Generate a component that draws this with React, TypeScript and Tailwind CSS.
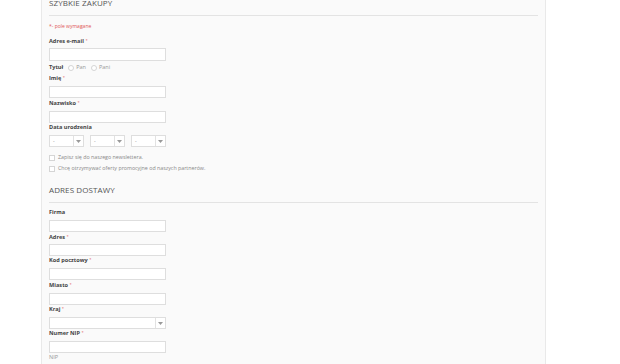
import React from "react";

const font = { fontFamily: '"Open Sans", "Liberation Sans", sans-serif' };

function Label({ text, req = true, className = "" }: { text: string; req?: boolean; className?: string }) {
  return (
    <div className={`h-[8px] flex items-center text-[5.6px] font-bold text-[#444] whitespace-nowrap overflow-visible ${className}`}>
      <span className="leading-none">{text}</span>
      {req && <span className="font-normal text-[#e05555] text-[4px] leading-none ml-[1.5px] self-start mt-[0.5px]">*</span>}
    </div>
  );
}

function Input({ className = "" }: { className?: string }) {
  return <div className={`w-[117px] h-[12px] bg-white border border-[#dedede] ${className}`} />;
}

function Arrow() {
  return (
    <div className="w-[10px] h-full border-l border-[#e2e2e2] flex items-center justify-center">
      <svg width="5" height="3" viewBox="0 0 5 3">
        <path d="M0 0 L5 0 L2.5 3 Z" fill="#999" />
      </svg>
    </div>
  );
}

function Select({ w, dash = true }: { w: string; dash?: boolean }) {
  return (
    <div className={`${w} h-[12px] bg-white border border-[#dedede] flex items-center justify-between`}>
      <span className="pl-[3px] text-[5px] text-[#888] leading-none">{dash ? "-" : ""}</span>
      <Arrow />
    </div>
  );
}

function Check({ text }: { text: string }) {
  return (
    <div className="flex items-center h-[8px] gap-[3px]">
      <div className="w-[6px] h-[6px] border border-[#d5d5d5] bg-white" />
      <span className="text-[5.3px] text-[#888] leading-none whitespace-nowrap">{text}</span>
    </div>
  );
}

function Radio({ text }: { text: string }) {
  return (
    <div className="flex items-center gap-[2px]">
      <div className="w-[6px] h-[6px] rounded-full border border-[#d5d5d5] bg-white" />
      <span className="text-[5.5px] text-[#999] leading-none">{text}</span>
    </div>
  );
}

function Heading({ text }: { text: string }) {
  return (
    <div className="border-b border-[#e3e3e3] text-[8px] leading-[12px] text-[#555] tracking-[0.1px] whitespace-nowrap pb-[6px] mr-[7px]">
      {text}
    </div>
  );
}

export default function App() {
  return (
    <div className="w-[620px] h-[364px] overflow-hidden bg-white" style={font}>
      <div className="ml-[41px] w-[505px] h-[364px] bg-[#fafafa] border-l border-r border-[#e9e9e9] pl-[7px] overflow-hidden">
        <div className="mt-[-6px] h-[22px] flex flex-col justify-end">
          <Heading text="SZYBKIE ZAKUPY" />
        </div>
        <div className="mt-[6px] h-[8px] leading-[8px] text-[5px] text-[#e05555]">*- pole wymagane</div>
        <Label text="Adres e-mail" className="mt-[8px]" />
        <Input className="mt-[2px] h-[13px]" />
        <div className="mt-[3px] h-[8px] flex items-center gap-[5px]">
          <span className="text-[5.6px] font-bold text-[#444] leading-none">Tytuł</span>
          <Radio text="Pan" />
          <Radio text="Pani" />
        </div>
        <Label text="Imię" className="mt-[3px]" />
        <Input className="mt-[3px]" />
        <Label text="Nazwisko" className="mt-[2px]" />
        <Input className="mt-[3px]" />
        <Label text="Data urodzenia" req={false} className="mt-[1px]" />
        <div className="mt-[3px] flex gap-[6px]">
          <Select w="w-[35px]" />
          <Select w="w-[35px]" />
          <Select w="w-[35px]" />
        </div>
        <div className="mt-[7px] flex flex-col gap-[3px]">
          <Check text="Zapisz się do naszego newslettera." />
          <Check text="Chcę otrzymywać oferty promocyjne od naszych partnerów." />
        </div>
        <div className="h-[30px] flex flex-col justify-end">
          <Heading text="ADRES DOSTAWY" />
        </div>
        <Label text="Firma" req={false} className="mt-[6px]" />
        <Input className="mt-[3px]" />
        <Label text="Adres" className="mt-[2px]" />
        <Input className="mt-[2px]" />
        <Label text="Kod pocztowy" className="mt-[1px]" />
        <Input className="mt-[3px]" />
        <Label text="Miasto" className="mt-[2px]" />
        <Input className="mt-[3px]" />
        <Label text="Kraj" className="mt-[1px]" />
        <div className="mt-[3px]">
          <Select w="w-[117px]" dash={false} />
        </div>
        <Label text="Numer NIP" className="mt-[1px]" />
        <Input className="mt-[3px]" />
        <div className="h-[8px] leading-[8px] text-[5.6px] text-[#999]">NIP</div>
      </div>
    </div>
  );
}
